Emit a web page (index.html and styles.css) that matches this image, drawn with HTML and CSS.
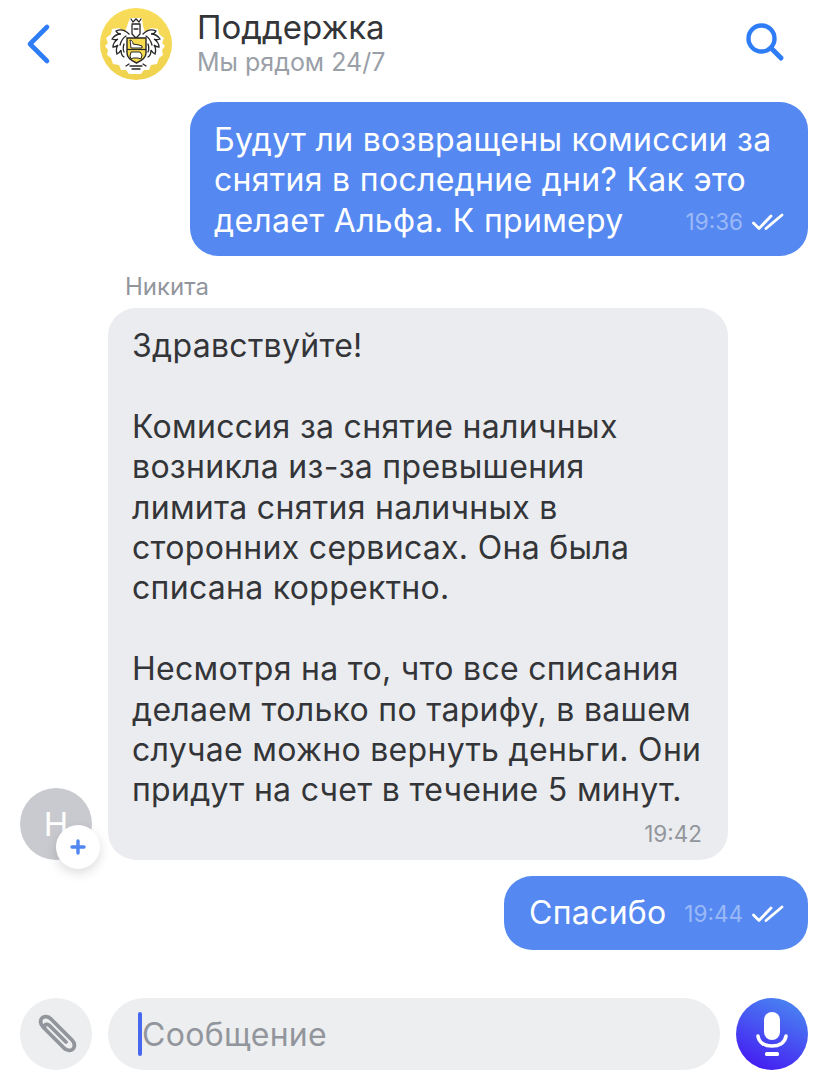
FILE: index.html
```html
<!DOCTYPE html>
<html lang="ru">
<head>
<meta charset="utf-8">
<title>Поддержка</title>
<link rel="stylesheet" href="styles.css">
</head>
<body>
<div class="app">
  <header class="top">
    <svg class="back" width="26" height="42" viewBox="0 0 26 42"><path d="M22 4 5 21l17 17" fill="none" stroke="#2f7df6" stroke-width="4.6" stroke-linecap="round" stroke-linejoin="round"/></svg>
    <svg class="logo" width="72" height="72" viewBox="0 0 72 72">
      <defs><linearGradient id="lg" x1="0" y1="0" x2="0" y2="1"><stop offset="0" stop-color="#f9dd5a"/><stop offset="1" stop-color="#efd24e"/></linearGradient></defs>
      <circle cx="36" cy="36" r="36" fill="url(#lg)"/>
      <path d="M30 10h12l1 8 2 6 6-4 7 1 1 5 5 4-2 5 3 3-3 4 1 5-4 3-2 6-6 1-2 5-5 0-3 4h-12l-3-4-5 0-2-5-6-1-2-6-4-3 1-5-3-4 3-3-2-5 5-4 1-5 7-1 6 4 2-6z" fill="#fff"/>
      <g fill="none" stroke="#262626" stroke-width="1.300" stroke-linecap="round">
        <path d="M31 11l2 3 3-3 3 3 2-3M32 16h8M32 17v9l4 4 4-4v-9M34 21h4"/>
        <path d="M29 26c-4-4-9-5-13-3 1 2 3 3 5 3-4 0-7 2-9 5 2 1 4 1 6 0-3 2-5 5-5 8 2 0 4-1 5-2-2 3-2 6-1 9 2-1 3-2 4-4 0 3 1 6 3 7"/>
        <path d="M43 26c4-4 9-5 13-3-1 2-3 3-5 3 4 0 7 2 9 5-2 1-4 1-6 0 3 2 5 5 5 8-2 0-4-1-5-2 2 3 2 6 1 9-2-1-3-2-4-4 0 3-1 6-3 7"/>
        <path d="M26 28c-3 2-5 5-6 9M46 28c3 2 5 5 6 9M24 36c-1 3-1 6 0 8M48 36c1 3 1 6 0 8"/>
        <path d="M30 58h12M32 61h8M29 56l-3 2M43 56l3 2"/>
      </g>
      <path d="M27 30h19v15c0 5-5 8-9.500 10-4.500-2-9.500-5-9.500-10z" fill="#f6dc4e" stroke="#262626" stroke-width="1.400"/>
      <path d="M27 41.500h19" stroke="#262626" stroke-width="1.200"/>
      <path d="M30 32c2 0 3 2 3 4l6 1 3 1v2H31zM31 44h9l2 3-1 4-3-1h-5l-2 1-1-3z" fill="#fff" stroke="#262626" stroke-width="1"/>
    </svg>
    <div class="title">
      <div class="name">Поддержка</div>
      <div class="status">Мы рядом 24/7</div>
    </div>
    <svg class="search" width="42" height="42" viewBox="0 0 42 42"><circle cx="17.500" cy="17.500" r="13" fill="none" stroke="#2f7df6" stroke-width="4.400"/><path d="M27 27l10 10" stroke="#2f7df6" stroke-width="5" stroke-linecap="round"/></svg>
  </header>

  <main class="chat">
    <div class="bubble out first">
      Будут ли возвращены комиссии за<br>снятия в последние дни? Как это
      <div class="last"><span>делает Альфа. К примеру</span>
        <span class="meta"><span class="time">19:36</span>
          <svg class="ticks" width="32" height="18" viewBox="0 0 32 18"><path d="M1.500 10l5.500 5.500L19 3M14 15.500 30 2" fill="none" stroke="#fff" stroke-width="2.800" stroke-linecap="round" stroke-linejoin="round"/></svg>
        </span>
      </div>
    </div>

    <div class="sender">Никита</div>
    <div class="incoming">
      <div class="avatar">Н
        <div class="plus"><svg width="16" height="16" viewBox="0 0 16 16"><path d="M8 2v12M2 8h12" stroke="#4f86f0" stroke-width="3.400" stroke-linecap="round"/></svg></div>
      </div>
      <div class="bubble in">
        <p>Здравствуйте!</p>
        <p>Комиссия за снятие наличных<br>возникла из-за превышения<br>лимита снятия наличных в<br>сторонних сервисах. Она была<br>списана корректно.</p>
        <p>Несмотря на то, что все списания<br>делаем только по тарифу, в вашем<br>случае можно вернуть деньги. Они<br>придут на счет в течение 5 минут.</p>
        <div class="time-in">19:42</div>
      </div>
    </div>

    <div class="bubble out thanks">
      <span>Спасибо</span>
      <span class="meta"><span class="time">19:44</span>
        <svg class="ticks" width="32" height="18" viewBox="0 0 32 18"><path d="M1.500 10l5.500 5.500L19 3M14 15.500 30 2" fill="none" stroke="#fff" stroke-width="2.800" stroke-linecap="round" stroke-linejoin="round"/></svg>
      </span>
    </div>
  </main>

  <footer class="composer">
    <div class="attach">
      <svg width="48" height="48" viewBox="0 0 48 48"><path d="M36 38 14 16c-3-3-3-7-1-9s6-2 9 1l21 21c3 3 3 7 1 9s-6 2-9-1L17 19c-2-2-2-4-1-5s3-1 5 1l16 16" transform="translate(-3 1)" fill="none" stroke="#92969c" stroke-width="3.800" stroke-linecap="round"/></svg>
    </div>
    <div class="input"><span class="caret"></span><span class="ph">Сообщение</span></div>
    <div class="mic">
      <svg width="36" height="46" viewBox="0 0 36 46"><rect x="10" y="1" width="16" height="28" rx="8" fill="#fff"/><path d="M4 25c1 7 7 10 14 10s13-3 14-10" fill="none" stroke="#fff" stroke-width="3.600" stroke-linecap="round"/><rect x="11" y="41" width="14" height="4" rx="1.500" fill="#fff"/></svg>
    </div>
  </footer>
</div>
</body>
</html>
```
FILE: styles.css
```css
* { box-sizing: border-box; }
html, body { margin: 0; padding: 0; background: #fff; }
body { font-family: Inter, "Liberation Sans", sans-serif; color: #333538; }
.app { width: 828px; height: 1084px; display: flex; flex-direction: column; overflow: hidden; }

.top { height: 102px; flex: none; display: flex; align-items: flex-start; padding: 8px 42px 0 25px; }
.back { margin-top: 15px; flex: none; }
.logo { margin-left: 49px; flex: none; }
.title { margin-left: 25px; flex: 1; padding-top: 1px; }
.name { font-size: 33px; line-height: 36px; color: #333538; }
.status { font-size: 25px; line-height: 34px; color: #9a9fa8; }
.search { margin-top: 13px; flex: none; }

.chat { flex: 1; display: flex; flex-direction: column; padding: 0 20px; }
.bubble { font-size: 32px; letter-spacing: .3px; line-height: 40.4px; border-radius: 28px; white-space: nowrap; }
.out { background: #5589f1; color: #fff; align-self: flex-end; }
.first { width: 618px; height: 154px; padding: 18px 24px 0 24px; }
.last { display: flex; justify-content: space-between; align-items: center; }
.meta { display: flex; align-items: center; gap: 9px; padding-top: 2px; letter-spacing: 0; }
.time { font-size: 22.500px; color: rgba(255,255,255,.42); line-height: 24px; }
.ticks { flex: none; }

.sender { margin: 18px 0 0 105px; font-size: 24px; line-height: 26px; color: #92969c; height: 26px; }
.incoming { display: flex; align-items: flex-end; gap: 16px; margin-top: 8px; }
.avatar { position: relative; width: 72px; height: 72px; border-radius: 50%; background: #c8cad0; color: #fff; font-size: 33px; display: flex; align-items: center; justify-content: center; flex: none; }
.plus { position: absolute; left: 36px; top: 37px; width: 44px; height: 44px; border-radius: 50%; background: #fff; box-shadow: 0 4px 12px rgba(0,0,0,.14); display: flex; align-items: center; justify-content: center; }
.in { width: 620px; height: 552px; background: #ebecef; padding: 18px 0 0 24px; position: relative; }
.in p { margin: 0 0 40.4px; }
.time-in { position: absolute; right: 26px; bottom: 14px; font-size: 22.500px; letter-spacing: 0; line-height: 24px; color: #92969c; }
.thanks { margin-top: 16px; width: 304px; height: 74px; padding: 0 24px 0 25px; display: flex; align-items: center; justify-content: space-between; }

.composer { height: 86px; flex: none; display: flex; gap: 16px; padding: 0 20px; }
.attach, .mic { width: 72px; height: 72px; border-radius: 50%; display: flex; align-items: center; justify-content: center; flex: none; }
.attach { background: #edeef0; }
.mic { background: linear-gradient(205deg, #4a90f2 0%, #4410f2 100%); }
.input { flex: 1; height: 72px; border-radius: 36px; background: #edeef0; display: flex; align-items: center; padding-left: 30px; font-size: 32px; letter-spacing: .3px; color: #92969c; }
.caret { width: 4px; height: 44px; border-radius: 2px; background: #4767ee; flex: none; }
```
